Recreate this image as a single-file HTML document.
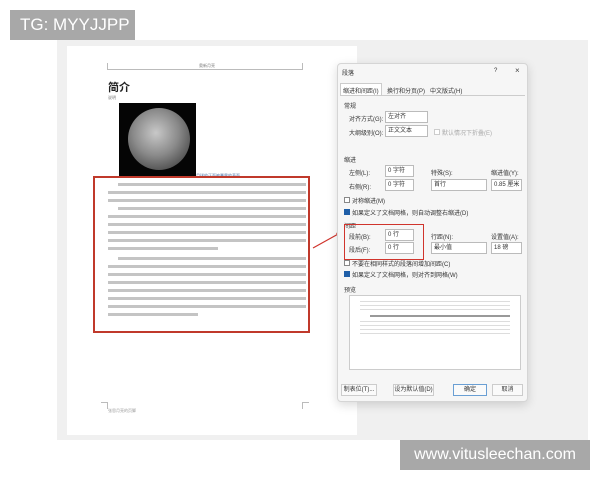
<!DOCTYPE html>
<html><head><meta charset="utf-8"><style>
*{margin:0;padding:0;box-sizing:border-box}
body{width:600px;height:480px;background:#fff;position:relative;overflow:hidden;font-family:"Liberation Sans","Noto Sans CJK SC",sans-serif;color:#333}
.a{position:absolute;white-space:nowrap}
.t{font-size:6px;color:#333}
.in{position:absolute;border:1px solid #bbb;background:#fff;font-size:6px;padding-left:2px;line-height:10px}
.ln{position:absolute;height:3px;background:#c4c4c4}
.cb{position:absolute;width:6px;height:6px;border:1px solid #888;background:#fff}
.cb.on{background:#1f5fa8;border-color:#1f5fa8}
.btn{position:absolute;border:1px solid #ccc;background:#fafafa;font-size:6px;text-align:center;line-height:11px}
</style></head><body>
<div class="a" style="left:57px;top:40px;width:531px;height:400px;background:#f0f0f0"></div>
<div class="a" style="left:67px;top:46px;width:290px;height:389px;background:#fff"></div>
<div class="a" style="left:107px;top:69px;width:196px;height:1px;background:#bbb"></div>
<div class="a" style="left:107px;top:63px;width:1px;height:7px;background:#bbb"></div>
<div class="a" style="left:302px;top:63px;width:1px;height:7px;background:#bbb"></div>
<div class="a t" style="left:199px;top:63px;font-size:4px;color:#777">奥新月亮</div>
<div class="a" style="left:108px;top:79px;font-size:11px;font-weight:bold;color:#222">简介</div>
<div class="a" style="left:108px;top:95px;font-size:4px;color:#777">说明</div>
<div class="a" style="left:119px;top:103px;width:77px;height:73px;background:#050505"></div>
<div class="a" style="left:128px;top:108px;width:62px;height:62px;border-radius:50%;background:radial-gradient(circle at 45% 40%,#c8c8c8,#8a8a8a 45%,#555 75%,#333)"></div>
<div class="a" style="left:196px;top:173px;font-size:4px;color:#4a6fa5">月球的正面被暴露的表面</div>
<div class="a" style="left:93px;top:176px;width:217px;height:157px;border:2px solid #c0392b"></div>
<div class="ln" style="left:118px;top:183px;width:188px"></div>
<div class="ln" style="left:108px;top:191px;width:198px"></div>
<div class="ln" style="left:108px;top:199px;width:198px"></div>
<div class="ln" style="left:118px;top:207px;width:188px"></div>
<div class="ln" style="left:108px;top:215px;width:198px"></div>
<div class="ln" style="left:108px;top:223px;width:198px"></div>
<div class="ln" style="left:108px;top:231px;width:198px"></div>
<div class="ln" style="left:108px;top:239px;width:198px"></div>
<div class="ln" style="left:108px;top:247px;width:110px"></div>
<div class="ln" style="left:118px;top:257px;width:188px"></div>
<div class="ln" style="left:108px;top:265px;width:198px"></div>
<div class="ln" style="left:108px;top:273px;width:198px"></div>
<div class="ln" style="left:108px;top:281px;width:198px"></div>
<div class="ln" style="left:108px;top:289px;width:198px"></div>
<div class="ln" style="left:108px;top:297px;width:198px"></div>
<div class="ln" style="left:108px;top:305px;width:198px"></div>
<div class="ln" style="left:108px;top:313px;width:90px"></div>
<div class="a" style="left:101px;top:402px;width:7px;height:1px;background:#bbb"></div>
<div class="a" style="left:107px;top:402px;width:1px;height:7px;background:#bbb"></div>
<div class="a" style="left:302px;top:402px;width:7px;height:1px;background:#bbb"></div>
<div class="a" style="left:302px;top:402px;width:1px;height:7px;background:#bbb"></div>
<div class="a" style="left:108px;top:408px;font-size:4px;color:#999">张思月亮的页脚</div>
<svg class="a" style="left:310px;top:225px" width="36" height="26"><line x1="3" y1="23" x2="30" y2="8" stroke="#d0342c" stroke-width="1.2"/><path d="M33 6 L26 8 L29 12 Z" fill="#d0342c"/></svg>
<div class="a" style="left:337px;top:63px;width:191px;height:339px;background:#f6f6f6;border:1px solid #d5d5d5;border-radius:4px;box-shadow:0 3px 10px rgba(0,0,0,.15)"></div>
<div class="a t" style="left:342px;top:68px">段落</div>
<div class="a t" style="left:494px;top:68px">?</div>
<div class="a" style="left:515px;top:66px;font-size:8px;color:#444">×</div>
<div class="a" style="left:340px;top:83px;width:42px;height:13px;border:1px solid #ccc;border-bottom:none;background:#fff"></div>
<div class="a" style="left:340px;top:95px;width:185px;height:1px;background:#ccc"></div>
<div class="a t" style="left:343px;top:86px">缩进和间距(I)</div>
<div class="a t" style="left:387px;top:86px">换行和分页(P)</div>
<div class="a t" style="left:430px;top:86px">中文版式(H)</div>
<div class="a t" style="left:344px;top:101px">常规</div>
<div class="a t" style="left:349px;top:114px">对齐方式(G):</div>
<div class="in" style="left:385px;top:111px;width:43px;height:12px">左对齐</div>
<div class="a t" style="left:349px;top:128px">大纲级别(O):</div>
<div class="in" style="left:385px;top:125px;width:43px;height:12px">正文文本</div>
<div class="cb" style="left:434px;top:129px;border-color:#ccc"></div>
<div class="a t" style="left:442px;top:128px;color:#aaa">默认情况下折叠(E)</div>
<div class="a t" style="left:344px;top:155px">缩进</div>
<div class="a t" style="left:349px;top:168px">左侧(L):</div>
<div class="in" style="left:385px;top:165px;width:29px;height:12px">0 字符</div>
<div class="a t" style="left:431px;top:168px">特殊(S):</div>
<div class="a t" style="left:491px;top:168px">缩进值(Y):</div>
<div class="a t" style="left:349px;top:182px">右侧(R):</div>
<div class="in" style="left:385px;top:179px;width:29px;height:12px">0 字符</div>
<div class="in" style="left:431px;top:179px;width:56px;height:12px">首行</div>
<div class="in" style="left:491px;top:179px;width:31px;height:12px">0.85 厘米</div>
<div class="cb" style="left:344px;top:197px"></div>
<div class="a t" style="left:352px;top:196px">对称缩进(M)</div>
<div class="cb on" style="left:344px;top:209px"></div>
<div class="a t" style="left:352px;top:208px">如果定义了文档网格，则自动调整右缩进(D)</div>
<div class="a t" style="left:344px;top:221px">间距</div>
<div class="a t" style="left:349px;top:232px">段前(B):</div>
<div class="in" style="left:385px;top:229px;width:29px;height:12px">0 行</div>
<div class="a t" style="left:349px;top:245px">段后(F):</div>
<div class="in" style="left:385px;top:242px;width:29px;height:12px">0 行</div>
<div class="a" style="left:344px;top:224px;width:80px;height:36px;border:1.5px solid #d0342c"></div>
<div class="a t" style="left:431px;top:232px">行距(N):</div>
<div class="a t" style="left:491px;top:232px">设置值(A):</div>
<div class="in" style="left:431px;top:242px;width:56px;height:12px">最小值</div>
<div class="in" style="left:491px;top:242px;width:31px;height:12px">18 磅</div>
<div class="cb" style="left:344px;top:260px"></div>
<div class="a t" style="left:352px;top:259px">不要在相同样式的段落间增加间距(C)</div>
<div class="cb on" style="left:344px;top:271px"></div>
<div class="a t" style="left:352px;top:270px">如果定义了文档网格，则对齐到网格(W)</div>
<div class="a t" style="left:344px;top:285px">预览</div>
<div class="a" style="left:349px;top:295px;width:172px;height:75px;border:1px solid #ccc;background:#fff"></div>
<div class="a" style="left:360px;top:300px;width:150px;height:12px;background:repeating-linear-gradient(#fff 0 1px,#ddd 1px 2px,#fff 2px 4px)"></div>
<div class="a" style="left:370px;top:315px;width:140px;height:2px;background:#999"></div>
<div class="a" style="left:360px;top:320px;width:150px;height:14px;background:repeating-linear-gradient(#fff 0 1px,#ddd 1px 2px,#fff 2px 4px)"></div>
<div class="btn" style="left:341px;top:384px;width:36px;height:12px">制表位(T)...</div>
<div class="btn" style="left:393px;top:384px;width:41px;height:12px">设为默认值(D)</div>
<div class="btn" style="left:453px;top:384px;width:34px;height:12px;border-color:#6a9fd4">确定</div>
<div class="btn" style="left:492px;top:384px;width:31px;height:12px">取消</div>
<div class="a" style="left:10px;top:10px;width:125px;height:30px;background:#a8a8a8;color:#fff;font-size:17px;line-height:30px;padding-left:10px">TG: MYYJJPP</div>
<div class="a" style="left:400px;top:440px;width:190px;height:30px;background:#a8a8a8;color:#fff;font-size:16px;line-height:30px;text-align:center">www.vitusleechan.com</div>
</body></html>
